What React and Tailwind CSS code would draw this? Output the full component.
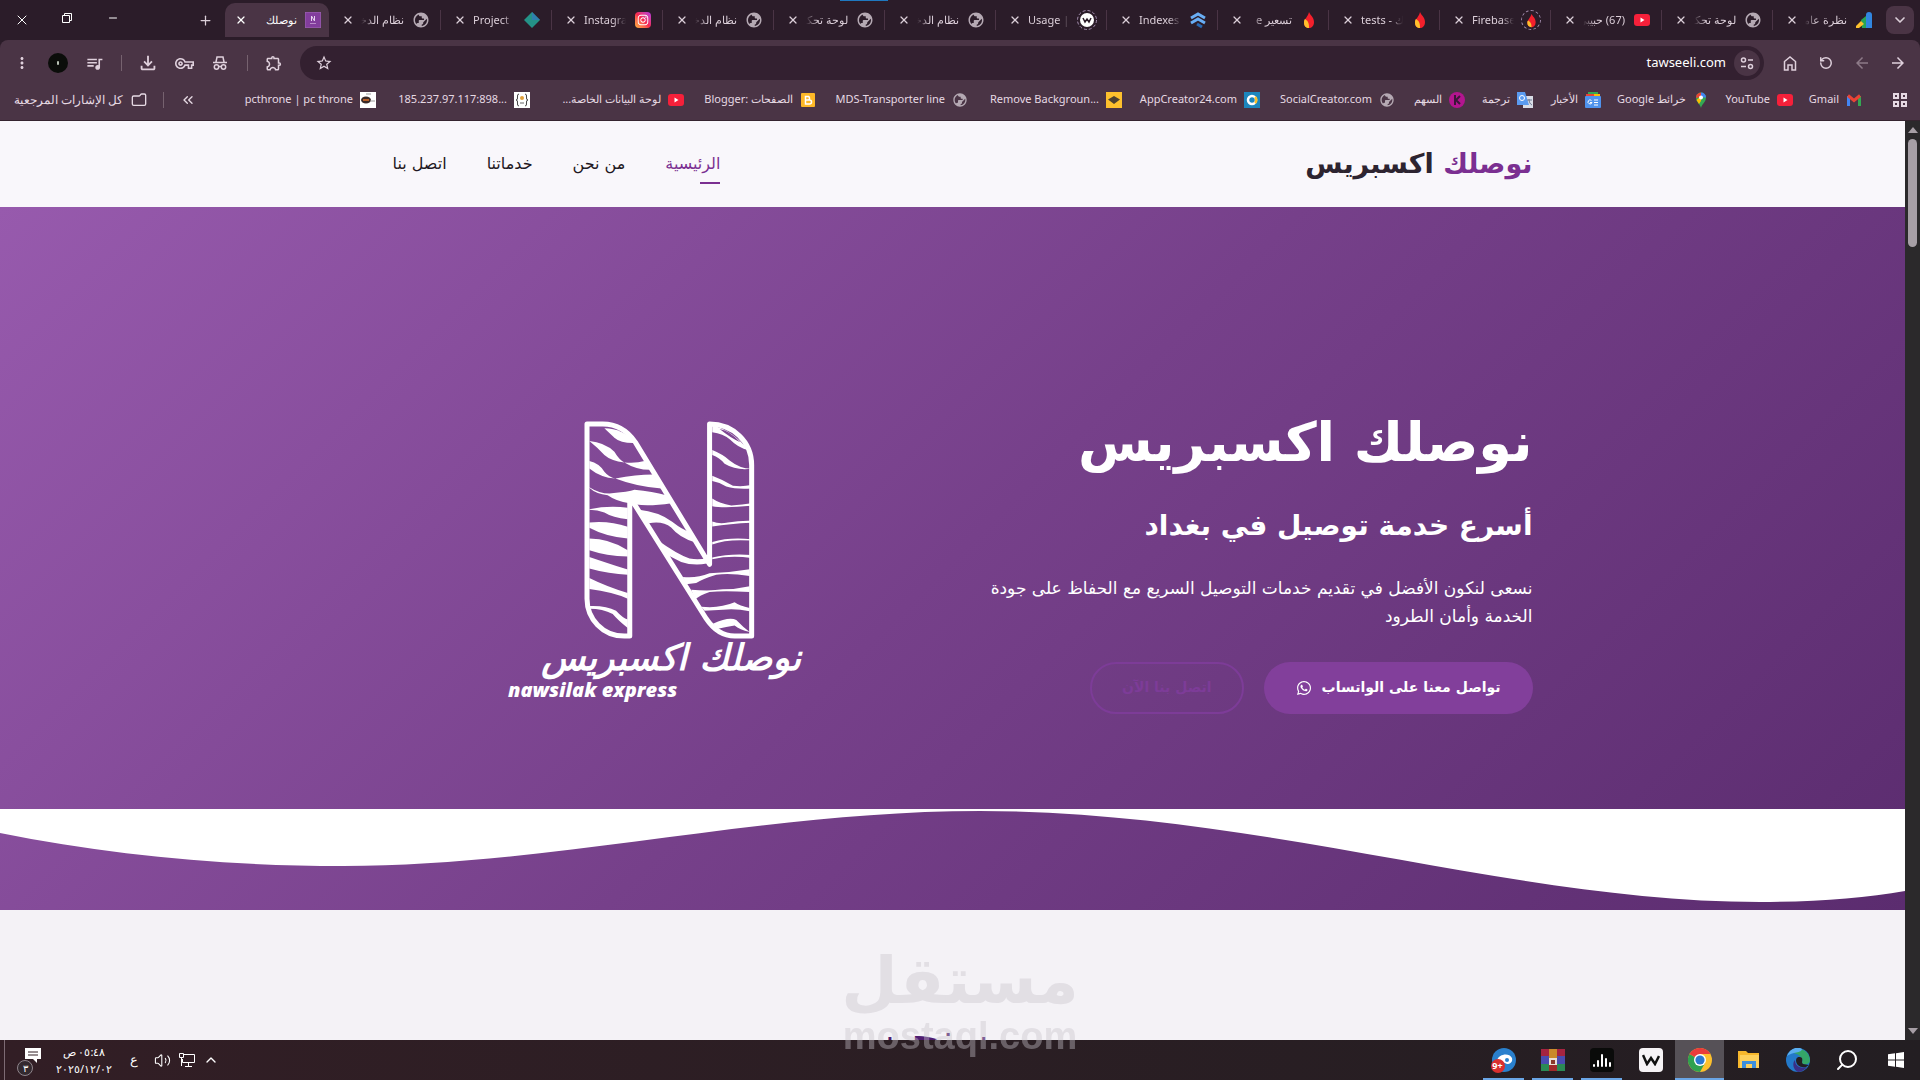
import React from "react";
import clsx from "clsx";
import { FaInstagram, FaWhatsapp } from "react-icons/fa";
import {
  MdArrowBack,
  MdArrowForward,
  MdMoreVert,
  MdOutlineExtension,
  MdOutlineFileDownload,
  MdOutlineVpnKey,
  MdPublic,
  MdQueueMusic,
  MdStarBorder,
} from "react-icons/md";
import { ChevronDown, ChevronUp, ChevronsLeft, Folder, Minus, Plus, RotateCcw, Search, Volume2, X } from "lucide-react";

const Globe = () => <MdPublic className="size-[18px] -scale-x-100 text-[#b5a9b3]" />;

const YouTube = () => (
  <svg viewBox="0 0 16 16" className="size-4">
    <rect y="2" width="16" height="12" rx="3" fill="#f6203a" />
    <path d="M6.500 5.500v5l4-2.500z" fill="#fff" />
  </svg>
);

const Flame = () => (
  <svg viewBox="0 0 18 18" className="size-[18px]">
    <path d="M9 1c1 3 5 5 5 10 0 4-2.500 6-5 6s-5-2-5-5c0-4 4-6 5-11z" fill="#f4202c" />
    <path d="M5 8c1 1 2 1 3 3s1 4 1 6c-3 0-5-2-5-5 0-2 0-3 1-4z" fill="#fdc02d" />
  </svg>
);

const FlameRing = () => (
  <span className="flex size-[20px] items-center justify-center rounded-full border border-dashed border-[#a58fb0]">
    <svg viewBox="0 0 18 18" className="size-[15px]">
      <path d="M9 1c1 3 5 5 5 10 0 4-2.500 6-5 6s-5-2-5-5c0-4 4-6 5-11z" fill="#f4202c" />
      <path d="M5 9c1 1 2 1 3 3s1 3 1 5c-3 0-5-2-5-5 0-2 0-2 1-3z" fill="#fdc02d" />
    </svg>
  </span>
);

const Ads = () => (
  <svg viewBox="0 0 18 18" className="size-[18px]">
    <path d="M11 4a3 3 0 0 1 6 0v13h-6z" fill="#3186e0" />
    <path d="M6 9l5-4v12H7z" fill="#27a556" />
    <path d="M1 15l5-5 3 3-5 4H1z" fill="#fdc02d" />
  </svg>
);

const Chevrons = () => (
  <svg viewBox="0 0 18 18" className="size-[18px]" fill="none" strokeWidth="3">
    <path d="M2 7l7-4 7 4" stroke="#69aef5" />
    <path d="M2 12l7-4 7 4" stroke="#69aef5" />
    <path d="M8 13l5 3" stroke="#2868b0" />
  </svg>
);

const Diamond = () => (
  <svg viewBox="0 0 18 18" className="size-[18px]">
    <path d="M9 1l8 8-8 8-8-8z" fill="#249287" />
    <path d="M9 1l8 8H9z" fill="#2f7fae" />
  </svg>
);

const Insta = () => (
  <span className="flex size-4 items-center justify-center rounded bg-linear-to-tr from-[#fdb13a] via-[#f5244f] to-[#b52de0] text-white">
    <FaInstagram className="size-3" />
  </span>
);

const WordMark = () => (
  <svg viewBox="0 0 20 20" className="size-5">
    <circle cx="10" cy="10" r="9.500" fill="none" stroke="#a58fb0" strokeDasharray="3 2" />
    <circle cx="10" cy="10" r="7" fill="#fff" />
    <path d="M6 8l2 4 2-3 2 3 2-4" fill="none" stroke="#2b1c29" strokeWidth="1.500" />
  </svg>
);

const SiteIcon = () => (
  <svg viewBox="0 0 16 16" className="size-4">
    <rect width="16" height="16" rx="1" fill="#823d9c" stroke="#a06bb5" />
    <path d="M6.500 9V4l3 5V4" stroke="#e6d2ee" fill="none" />
    <path d="M5 11.500h6" stroke="#b98bc9" />
  </svg>
);

const Maps = () => (
  <svg viewBox="0 0 16 16" className="size-4">
    <path d="M8 16C7 12 3 10 3 5.500a5 5 0 0 1 10 0C13 10 9 12 8 16z" fill="#34a853" />
    <path d="M3 6a5 5 0 0 1 5-5.500V5z" fill="#ea4335" />
    <path d="M8 .500a5 5 0 0 1 5 5H8z" fill="#4285f4" />
    <path d="M3.500 8L8 4v5l-2 3z" fill="#fbbc04" />
    <circle cx="8" cy="5.500" r="2" fill="#fff" />
  </svg>
);

const Gmail = () => (
  <svg viewBox="0 0 16 16" className="size-4" fill="none" strokeWidth="3">
    <path d="M2.500 14V4" stroke="#4285f4" />
    <path d="M13.500 14V4" stroke="#34a853" />
    <path d="M2 3.500l6 5 6-5" stroke="#ea4335" />
  </svg>
);

const Translate = () => (
  <svg viewBox="0 0 16 16" className="size-4">
    <rect x="6" y="4" width="10" height="12" fill="#d9dde6" />
    <path d="M0 0h8l4 13H0z" fill="#5a9bf0" />
    <circle cx="5" cy="6" r="2.500" fill="none" stroke="#fff" />
    <path d="M10 8h5M12 7c0 3 1 5 3 6" stroke="#6d7b93" fill="none" />
  </svg>
);

const News = () => (
  <svg viewBox="0 0 16 16" className="size-4">
    <path d="M3 0h10v4H3z" fill="#34a853" />
    <path d="M1 2h8v4H1z" fill="#ea4335" />
    <path d="M9 2h6v4H9z" fill="#fbbc04" />
    <rect y="4" width="16" height="12" rx="1" fill="#4f93ee" />
    <path d="M6.500 8.500a2 2 0 1 0 .500 2H5M9 8h4M9 10.500h4M9 13h4" stroke="#fff" fill="none" />
  </svg>
);

const Arrow = () => (
  <svg viewBox="0 0 16 16" className="size-4">
    <circle cx="8" cy="8" r="8" fill="#b3158f" />
    <path d="M6 3v10M11 4L7 8l4 4" stroke="#3b1638" strokeWidth="2" fill="none" />
  </svg>
);

const Creator = () => (
  <svg viewBox="0 0 16 16" className="size-4">
    <rect width="16" height="16" fill="#1c86bd" />
    <circle cx="8" cy="8" r="4" stroke="#fff" strokeWidth="2.500" fill="none" />
    <path d="M11 5a4 4 0 0 1 0 6" stroke="#fdc02d" strokeWidth="2.500" fill="none" />
  </svg>
);

const Layers = () => (
  <svg viewBox="0 0 16 16" className="size-4">
    <rect width="16" height="16" fill="#fdc02d" />
    <path d="M8 4l6 3.500L8 12 2 7.500z" fill="#4d4030" />
  </svg>
);

const Blogger = () => (
  <svg viewBox="0 0 16 16" className="size-4">
    <rect x="1" y="1" width="14" height="14" rx="1" fill="#fdb827" />
    <path d="M5.500 4.500h3a2 2 0 0 1 0 3.500h-3zM5.500 8h4a2 2 0 0 1 0 4h-4z" fill="none" stroke="#fff" strokeWidth="1.500" />
  </svg>
);

const Braces = () => (
  <svg viewBox="0 0 16 16" className="size-4">
    <rect width="16" height="16" fill="#fff" />
    <path d="M5 2q-2 0-1.500 3T2 8q2 0 1.500 3T5 14M11 2q2 0 1.500 3T14 8q-2 0-1.500 3T11 14" stroke="#444" fill="none" />
    <circle cx="8" cy="6" r="2" fill="#e0a03a" />
    <path d="M6 11h4" stroke="#666" />
  </svg>
);

const Throne = () => (
  <svg viewBox="0 0 16 16" className="size-4">
    <rect width="16" height="16" fill="#fff" />
    <ellipse cx="6" cy="8" rx="5" ry="3.500" fill="#3a2a28" />
    <path d="M3 8h6" stroke="#e0702a" strokeWidth="1.500" />
    <path d="M10 9h5M6 2h5" stroke="#999" />
  </svg>
);

const tabs = [
  { title: "نظرة عامة", icon: Ads },
  { title: "لوحة تحكم", icon: Globe },
  { title: "(67) حبيبي", icon: YouTube },
  { title: "Firebase", icon: FlameRing, ltr: true },
  { title: "tests - نوصلك", icon: Flame, ltr: true },
  { title: "تسعير e", icon: Flame },
  { title: "Indexes", icon: Chevrons, ltr: true },
  { title: "Usage | W", icon: WordMark, ltr: true },
  { title: "نظام الدخول", icon: Globe },
  { title: "لوحة تحكم", icon: Globe },
  { title: "نظام الدخول", icon: Globe },
  { title: "Instagram", icon: Insta, ltr: true },
  { title: "Project", icon: Diamond, ltr: true },
  { title: "نظام الدخول", icon: Globe },
];

const bookmarks = [
  { title: "Gmail", icon: Gmail, width: "w-[53px]" },
  { title: "YouTube", icon: YouTube, width: "w-[68px]" },
  { title: "خرائط Google", icon: Maps, width: "w-[92px]" },
  { title: "الأخبار", icon: News, width: "w-[52px]" },
  { title: "ترجمة", icon: Translate, width: "w-[52px]" },
  { title: "السهم", icon: Arrow, width: "w-[54px]" },
  { title: "SocialCreator.com", icon: Globe, width: "w-[119px]" },
  { title: "AppCreator24.com", icon: Creator, width: "w-[122px]" },
  { title: "Remove Backgroun...", icon: Layers, width: "w-[138px]" },
  { title: "MDS-Transporter line", icon: Globe, width: "w-[136px]" },
  { title: "الصفحات :Blogger", icon: Blogger, width: "w-[116px]" },
  { title: "لوحة البيانات الخاصة...", icon: YouTube, width: "w-[138px]" },
  { title: "185.237.97.117:898...", icon: Braces, width: "w-[138px]", ltr: true },
  { title: "pcthrone | pc throne", icon: Throne, width: "w-[131px]" },
];

const navLinks = ["الرئيسية", "من نحن", "خدماتنا", "اتصل بنا"];

function Divider() {
  return <span className="h-4 w-px bg-[#76626f]" />;
}

function ToolButton({ label, children }) {
  return (
    <button type="button" aria-label={label} className="flex h-9 w-9 shrink-0 items-center justify-center">
      {children}
    </button>
  );
}

function TabStrip() {
  return (
    <div className="relative flex h-10 items-center bg-[#2b1c29] text-[#dccfd9]">
      <div className="absolute top-0 left-[840px] h-px w-12 bg-[#1f78c0]" />
      <button type="button" aria-label="البحث في علامات التبويب" className="ms-[6px] me-[3px] flex h-7 w-7 shrink-0 items-center justify-center rounded-lg bg-[#4a3445]">
        <ChevronDown className="size-4" strokeWidth={2.5} />
      </button>
      <div role="tablist" className="flex min-w-0 flex-1 items-center">
        {tabs.map((tab, i) => (
          <div
            key={i}
            role="tab"
            className={clsx("flex h-5 max-w-[111px] min-w-0 flex-1 items-center ps-[9px] pe-[13px]", i < tabs.length - 1 && "border-e border-[#4a3445]")}
          >
            <span className="flex w-5 shrink-0 justify-center">
              <tab.icon />
            </span>
            <span
              dir={tab.ltr ? "ltr" : "rtl"}
              className={clsx("mx-[7px] min-w-0 flex-1 overflow-hidden whitespace-nowrap", tab.ltr ? "mask-r-from-70%" : "mask-l-from-70%")}
            >
              {tab.title}
            </span>
            <button type="button" aria-label="إغلاق">
              <X className="size-3" strokeWidth={2.5} />
            </button>
          </div>
        ))}
        <div role="tab" aria-selected="true" className="flex h-[34px] w-[104px] shrink-0 items-center self-end rounded-t-[10px] bg-[#4a3445] ps-2 pe-[10px]">
          <SiteIcon />
          <span className="mx-2 flex-1 text-white">نوصلك</span>
          <button type="button" aria-label="إغلاق">
            <X className="size-3 text-white" strokeWidth={2.5} />
          </button>
        </div>
        <button type="button" aria-label="علامة تبويب جديدة" className="ms-[10px] flex w-5 justify-center">
          <Plus className="size-[15px]" />
        </button>
      </div>
      <div className="flex text-white">
        <button type="button" aria-label="تصغير" className="flex w-[46px] justify-center">
          <Minus className="size-3" />
        </button>
        <button type="button" aria-label="استعادة" className="flex w-[46px] justify-center">
          <svg viewBox="0 0 12 12" className="size-3" fill="none" stroke="currentColor">
            <path d="M1.500 3.500h7v7h-7zM3.500 3V1.500h7v7H9" />
          </svg>
        </button>
        <button type="button" aria-label="إغلاق النافذة" className="flex w-11 justify-center">
          <X className="size-4" strokeWidth={1.5} />
        </button>
      </div>
    </div>
  );
}

function Toolbar() {
  return (
    <div className="flex h-[46px] items-center rounded-t-lg bg-[#4a3445] px-1 text-[#dfd0dc]">
      <ToolButton label="التالي">
        <MdArrowForward className="size-[18px]" />
      </ToolButton>
      <ToolButton label="السابق">
        <MdArrowBack className="size-[18px] text-[#8d7a88]" />
      </ToolButton>
      <ToolButton label="إعادة التحميل">
        <RotateCcw className="size-[14px]" strokeWidth={2.5} />
      </ToolButton>
      <ToolButton label="الصفحة الرئيسية">
        <svg viewBox="0 0 14 16" className="h-4 w-[14px]" fill="none" stroke="currentColor" strokeWidth="1.500">
          <path d="M1.500 6.500L7 2l5.500 4.500V15H9v-5H5v5H1.500z" />
        </svg>
      </ToolButton>
      <div className="mx-2 flex h-[34px] flex-1 items-center gap-2 rounded-full bg-[#332030] ps-1 pe-[15px]">
        <button type="button" aria-label="معلومات الموقع" className="flex size-[26px] items-center justify-center rounded-full bg-[#4a3445]">
          <svg viewBox="0 0 14 14" className="size-[14px]" fill="none" stroke="currentColor" strokeWidth="1.500">
            <circle cx="3.500" cy="4" r="2" />
            <path d="M8 4h5M1 10.500h5" />
            <circle cx="10.500" cy="10.500" r="2" />
          </svg>
        </button>
        <input aria-label="العنوان" defaultValue="tawseeli.com" className="min-w-0 flex-1 bg-transparent text-[13px] text-white outline-none" />
        <button type="button" aria-label="إضافة إشارة">
          <MdStarBorder className="size-[18px]" />
        </button>
      </div>
      <ToolButton label="الإضافات">
        <MdOutlineExtension className="size-[18px]" />
      </ToolButton>
      <span className="flex w-[18px] justify-center">
        <Divider />
      </span>
      <ToolButton label="التصفح المتخفي">
        <svg viewBox="0 0 16 16" className="size-4" fill="none" stroke="currentColor" strokeWidth="1.500">
          <path d="M1 7.500h14M4 7l1-5h6l1 5" />
          <circle cx="4.500" cy="12" r="2.200" />
          <circle cx="11.500" cy="12" r="2.200" />
          <path d="M6.500 11.500h3" />
        </svg>
      </ToolButton>
      <ToolButton label="كلمات المرور">
        <MdOutlineVpnKey className="size-[19px]" />
      </ToolButton>
      <ToolButton label="التنزيلات">
        <MdOutlineFileDownload className="size-[22px]" />
      </ToolButton>
      <span className="flex w-[18px] justify-center">
        <Divider />
      </span>
      <ToolButton label="الوسائط">
        <MdQueueMusic className="size-[19px]" />
      </ToolButton>
      <ToolButton label="الملف الشخصي">
        <span className="flex size-5 items-center justify-center rounded-full bg-[#0b0d0a]">
          <span className="h-1 w-0.5 rounded bg-[#b9c2b5]" />
        </span>
      </ToolButton>
      <ToolButton label="القائمة">
        <MdMoreVert className="size-[18px]" />
      </ToolButton>
    </div>
  );
}

function BookmarksBar() {
  return (
    <div className="flex h-[35px] items-center gap-4 overflow-hidden border-b border-[#35242f] bg-[#4a3445] ps-[13px] pe-[14px] pb-[7px] text-[#e6d9e3]">
      <button type="button" aria-label="التطبيقات" className="me-2">
        <svg viewBox="0 0 14 14" className="size-[14px]" fill="none" stroke="currentColor" strokeWidth="2">
          <path d="M1 1h4v4H1zM9 1h4v4H9zM1 9h4v4H1zM9 9h4v4H9z" />
        </svg>
      </button>
      <span className="-me-[9px]">
        <Divider />
      </span>
      {bookmarks.map((b) => (
        <a key={b.title} href="#" className={clsx("flex shrink-0 items-center gap-[7px] whitespace-nowrap", b.width)}>
          <span className="flex w-4 shrink-0 justify-center">
            <b.icon />
          </span>
          <span dir={b.ltr ? "ltr" : "auto"}>{b.title}</span>
        </a>
      ))}
      <button type="button" aria-label="المزيد" className="ms-auto">
        <ChevronsLeft className="size-4" />
      </button>
      <Divider />
      <a href="#" className="flex items-center gap-2 text-[12px] whitespace-nowrap">
        <Folder className="size-4 -scale-x-100" />
        كل الإشارات المرجعية
      </a>
    </div>
  );
}

function LogoMark() {
  return (
    <svg viewBox="284 68 512 654" className="me-0 ms-[46px] w-[171px]" aria-label="N">
      <g fill="none" stroke="#fff" strokeWidth="15" strokeLinejoin="round" strokeLinecap="round">
        <path d="M293 77H340C385 77 415 98 438 132L660 497V77C730 77 786 130 786 200V712H735C700 712 670 690 650 660L433 314H421V712H405C340 712 293 660 293 600Z" />
      </g>
      <g fill="#fff">
        <path d="M345 90Q400 90 440 134Q395 136 375 118Z" />
        <path d="M300 128Q345 132 375 160Q390 185 405 192Q440 195 465 188L482 214Q440 214 405 192Q365 188 345 170Q325 148 300 128Z" />
        <path d="M300 188Q330 195 345 220Q360 238 378 240Q440 228 490 228L516 270Q440 264 378 240Q335 238 300 210Z" />
        <path d="M300 266Q330 285 360 285Q420 280 435 274Q490 280 530 290L546 314Q480 324 440 318L420 314Q380 308 355 290Q320 287 300 268Z" />
        <path d="M300 332Q360 320 415 328V362Q370 358 345 342Q325 334 300 334Z" />
        <path d="M300 372Q360 366 415 385V420Q350 415 300 388Z" />
        <path d="M300 420Q360 420 415 455V474Q350 472 300 455Z" />
        <path d="M300 475Q350 492 415 513V528Q360 527 300 510Z" />
        <path d="M300 538Q350 563 415 583V600Q370 580 300 571Z" />
        <path d="M300 622Q350 620 380 636Q400 658 415 662V688Q385 664 370 646Q340 630 300 630Z" />
        <path d="M445 333Q510 340 548 370Q580 395 600 400L618 432Q570 418 545 387Q520 366 478 374Z" />
        <path d="M505 425Q560 465 600 480Q630 485 652 478V495Q610 502 575 490L535 470Z" />
        <path d="M580 535Q620 540 660 524Q720 522 780 512V532Q720 522 680 528Q640 540 620 553L590 557Z" />
        <path d="M605 573Q660 578 700 572Q740 572 780 563V580Q700 576 660 580Q630 590 617 602Z" />
        <path d="M635 624Q690 630 735 611Q750 622 780 628V638Q740 629 700 633L645 636Z" />
        <path d="M670 675Q720 652 740 664Q760 685 780 700Q750 692 735 680Q710 684 685 690Z" />
        <path fillRule="evenodd" d="M668 82Q725 92 776 155Q745 148 722 124Q700 106 668 102ZM690 92Q722 98 752 132Q722 118 690 92Z" />
        <path d="M668 155Q700 168 720 186Q750 210 785 211Q740 217 705 196Q690 178 668 170Z" />
        <path d="M668 232Q700 244 730 262Q760 265 785 260V270Q740 273 710 264Q690 252 668 248Z" />
        <path d="M668 300Q690 315 725 321Q760 318 785 314V322Q700 330 668 323Z" />
        <path d="M668 369Q690 378 715 372Q750 366 785 367V373Q720 376 668 384Z" />
        <path d="M668 430Q720 415 785 422V426Q710 421 668 438Z" />
        <path d="M668 477Q720 464 785 469V478Q720 470 668 482Z" />
      </g>
    </svg>
  );
}

function SiteHeader() {
  return (
    <header className="bg-[#f9f7fb]">
      <div className="mx-auto flex h-[86px] max-w-[1200px] items-center justify-between px-5">
        <a href="#" className="text-[27px] font-bold text-[#2d2430]">
          <span className="text-[#7b2f91]">نوصلك</span> اكسبريس
        </a>
        <nav className="flex gap-10 px-5 text-[16px] text-[#1f1822]">
          {navLinks.map((link, i) => (
            <a key={link} href="#" className={clsx("relative py-2", i === 0 && "text-[#7b2f91]")}>
              {link}
              {i === 0 && <span className="absolute right-0 bottom-0 h-0.5 w-5 bg-[#7b2f91]" />}
            </a>
          ))}
        </nav>
      </div>
    </header>
  );
}

function Hero() {
  return (
    <section className="relative bg-[linear-gradient(135deg,#975aad_0%,#76408a_50%,#5b2c6f_100%)] text-white">
      <div className="mx-auto grid min-h-[703px] max-w-[1200px] grid-cols-2 items-center gap-8 px-5">
        <div>
          <h1 className="text-[54px] leading-[78px] font-bold">نوصلك اكسبريس</h1>
          <h2 className="mt-5 text-[28px] leading-[48px] font-bold">أسرع خدمة توصيل في بغداد</h2>
          <p className="mt-6 text-[17px] leading-7">
            نسعى لنكون الأفضل في تقديم خدمات التوصيل السريع مع الحفاظ على جودة
            <br />
            الخدمة وأمان الطرود
          </p>
          <div className="mt-8 flex gap-5 text-[14px] font-bold">
            <a href="#" className="flex h-[52px] items-center gap-[10px] rounded-full bg-[#823f9b] px-8">
              تواصل معنا على الواتساب
              <FaWhatsapp className="size-4" />
            </a>
            <a href="#" className="flex h-[52px] items-center rounded-full border-2 border-[#7d3c98] px-[30px] text-[#7d3c98]">
              اتصل بنا الآن
            </a>
          </div>
        </div>
        <div className="flex justify-center pt-2">
          <div className="flex w-[293px] flex-col items-start">
            <LogoMark />
            <p className="text-[36px] leading-9 font-bold whitespace-nowrap italic">نوصلك اكسبريس</p>
            <p dir="ltr" className="w-full text-[20px] leading-7 font-extrabold italic font-['Open_Sans',sans-serif]">
              nawsilak express
            </p>
          </div>
        </div>
      </div>
      <svg viewBox="0 0 1905 101" preserveAspectRatio="none" className="absolute bottom-0 left-0 h-[101px] w-full">
        <path d="M0 24C110 46 225 57 343 57C555 57 760 2 980 2C1260 2 1510 93 1760 93C1815 93 1865 89 1905 82V0H0Z" fill="#fff" />
      </svg>
    </section>
  );
}

function Scrollbar() {
  return (
    <div className="flex w-[15px] shrink-0 flex-col items-center bg-[#2b292b] py-[6px]">
      <span className="border-x-[5px] border-b-[6px] border-x-transparent border-b-[#a79fa6]" />
      <span className="mt-[6px] h-[108px] w-[9px] rounded-full bg-[#a79fa6]" />
      <span className="mt-auto border-x-[5px] border-t-[6px] border-x-transparent border-t-[#a79fa6]" />
    </div>
  );
}

const ChromeLogo = () => (
  <svg viewBox="0 0 24 24" className="size-6">
    <circle cx="12" cy="12" r="12" fill="#fdc02d" />
    <path d="M12 12L1.600 6A12 12 0 0 0 12 24l5-9z" fill="#2fa14f" />
    <path d="M1.600 6A12 12 0 0 1 22.400 6H12v6z" fill="#e93b3b" />
    <circle cx="12" cy="12" r="6" fill="#fff" />
    <circle cx="12" cy="12" r="4.600" fill="#2b78cf" />
  </svg>
);

const WindowsLogo = () => (
  <svg viewBox="0 0 16 16" className="size-4" fill="#fff">
    <path d="M0 2.300L7 1.300V7.500H0zM8 1.200L16 0V7.500H8zM0 8.500H7V14.700L0 13.700zM8 8.500H16V16L8 14.800z" />
  </svg>
);

const EdgeLogo = () => (
  <svg viewBox="0 0 24 24" className="size-6">
    <circle cx="12" cy="12" r="12" fill="#2379c9" />
    <path d="M3 5A12 12 0 0 1 24 12c0 4-4 5-7 4-2-1 0-2-1-5C14 6 7 4 3 5z" fill="#34a668" />
    <path d="M1 8C4 0 12-2 16 1c0 4-10 3-15 7z" fill="#5aaef0" />
    <path d="M9 12c0 6 5 9 12 7A12 12 0 0 1 12 24C7 22 6 15 9 12z" fill="#3a2f86" />
    <path d="M10 12a3.500 3.500 0 0 1 6-2c1 3-1 4 1 6l6 1-3 2c-6 1-10-2-10-7z" fill="#231e22" />
  </svg>
);

const ExplorerLogo = () => (
  <svg viewBox="0 0 22 20" className="h-5 w-[22px]">
    <path d="M0 1h8l2 2h11v15H0z" fill="#f6b72c" />
    <path d="M2 5h19v13H2z" fill="#fdd05b" />
    <path d="M4 18v-7h14v7h-4v-4H8v4z" fill="#3d8fdc" />
  </svg>
);

const WhiteW = () => (
  <span className="flex size-6 items-center justify-center rounded-sm bg-[#f6f3f6]">
    <svg viewBox="0 0 18 12" className="w-[18px]" fill="none" stroke="#111" strokeWidth="2.500">
      <path d="M1 1l4 9 4-6 4 6L17 2" />
    </svg>
  </span>
);

const Bars = () => (
  <span className="flex size-6 items-center justify-center rounded bg-[#0a0b0a]">
    <svg viewBox="0 0 18 14" className="w-[18px]" stroke="#fff" strokeWidth="2" strokeLinecap="round">
      <path d="M1 12v1M5 8v5M9 2v11M13 6v7M17 10v3" />
    </svg>
  </span>
);

const Books = () => (
  <svg viewBox="0 0 24 22" className="h-[22px] w-6">
    <path d="M0 0h24v7H0z" fill="#a52440" />
    <path d="M0 7h24v8H0z" fill="#4a4bb0" />
    <path d="M0 15h24v7H0z" fill="#2b8a55" />
    <path d="M8 0h8v22H8z" fill="#c98a2b" />
    <path d="M8 9h8v7H8z" fill="#e9dfd5" />
    <path d="M10 11h4v4h-4z" fill="#8b3a2a" />
    <path d="M8 16h8v6H8z" fill="#a12a2a" />
  </svg>
);

const Eye = () => (
  <span className="relative">
    <svg viewBox="0 0 24 24" className="size-6">
      <circle cx="12" cy="12" r="12" fill="#2a80cd" />
      <path d="M5 12c2-6 12-8 15-2 1 4-2 6-5 6-3-1-5-3-8-3z" fill="#fff" />
      <circle cx="15" cy="12" r="2" fill="#2a80cd" />
    </svg>
    <span dir="ltr" className="absolute -bottom-px -left-px flex h-[14px] w-[14px] items-center justify-center rounded-full bg-[#da2f2f] text-[9px] font-bold text-white">
      9+
    </span>
  </span>
);

const apps = [
  { label: "ابدأ", icon: WindowsLogo },
  { label: "بحث", icon: () => <Search className="size-6 -scale-x-100 text-white" strokeWidth={2} /> },
  { label: "Edge", icon: EdgeLogo },
  { label: "مستكشف الملفات", icon: ExplorerLogo },
  { label: "Chrome", icon: ChromeLogo, active: true },
  { label: "W", icon: WhiteW },
  { label: "الصوت", icon: Bars, open: true },
  { label: "WinRAR", icon: Books, open: true },
  { label: "المراسلة", icon: Eye, open: true },
];

function Taskbar() {
  return (
    <footer className="flex h-10 shrink-0 items-center bg-linear-to-l from-[#231e22] to-[#321e25] text-white">
      {apps.map((app) => (
        <button
          key={app.label}
          type="button"
          aria-label={app.label}
          className={clsx("relative flex h-10 w-[49px] items-center justify-center", app.active && "bg-[#565157]")}
        >
          <app.icon />
          {app.active && <span className="absolute inset-x-0 bottom-0 h-0.5 bg-[#6aa6e6]" />}
          {app.open && <span className="absolute inset-x-1 bottom-0 h-0.5 bg-[#6aa6e6]" />}
        </button>
      ))}
      <div className="ms-auto flex items-center">
        <ChevronUp className="mx-1 size-4" />
        <svg viewBox="0 0 16 16" className="mx-1 size-4" fill="none" stroke="currentColor">
          <path d="M4 2.500h11.500v8H3.500V7M9.500 11v3M6 14.500h7" />
          <path d="M.500 1.500h4v4h-4zM2.500 5v9" />
        </svg>
        <Volume2 className="mx-1 size-[17px] -scale-x-100 rotate-180" strokeWidth={1.5} />
        <span className="ms-2 me-1 w-4 text-center text-[13px]">ع</span>
        <div className="w-[76px] text-center leading-[17px]">
          <div>٠٥:٤٨ ص</div>
          <div dir="ltr">٢٠٢٥/١٢/٠٢</div>
        </div>
        <button type="button" aria-label="الإشعارات" className="relative ms-[5px] me-3 h-8 w-6">
          <svg viewBox="0 0 16 16" className="mb-2 size-4">
            <path d="M0 0h16v11h-4v4l-4-4H0z" fill="#fff" />
            <path d="M3 4h10M3 7h10" stroke="#321e25" />
          </svg>
          <span className="absolute bottom-0 left-0 flex size-4 items-center justify-center rounded-full border border-[#8f858c] bg-[#33292f] text-[10px]">٣</span>
        </button>
        <span className="me-1 h-10 w-px bg-[#7d6b74]" />
      </div>
    </footer>
  );
}

export default function App() {
  return (
    <div dir="rtl" className="relative flex h-screen flex-col overflow-hidden text-[11px] font-['Noto_Sans',sans-serif]">
      <div className="bg-[#2b1c29]">
        <TabStrip />
        <Toolbar />
        <BookmarksBar />
      </div>
      <div className="flex min-h-0 flex-1">
        <Scrollbar />
        <main className="min-w-0 flex-1 overflow-hidden bg-[#f4f2f6] font-['DejaVu_Sans',sans-serif]">
          <SiteHeader />
          <Hero />
          <section className="pt-[98px] text-center">
            <h2 className="text-[40px] leading-[60px] font-bold text-[#4f1d70]">من نحن</h2>
          </section>
        </main>
      </div>
      <Taskbar />
      <div className="pointer-events-none absolute inset-x-0 bottom-6 flex flex-col items-center font-bold text-[#c8c3cb] opacity-40">
        <span className="text-[65px] leading-[70px] font-['DejaVu_Sans',sans-serif]">مستقل</span>
        <span dir="ltr" className="text-[38px] leading-10 font-['Liberation_Sans',sans-serif]">mostaql.com</span>
      </div>
    </div>
  );
}
